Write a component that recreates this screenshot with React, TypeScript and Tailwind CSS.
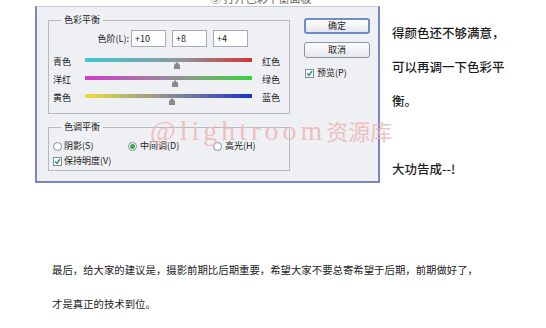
import React from 'react';

const sliders = [
  { left: '青色', right: '红色', pos: 92, bar: 'bg-[linear-gradient(90deg,#3cc8d4,#8a9aa0_55%,#d23434)]' },
  { left: '洋红', right: '绿色', pos: 90, bar: 'bg-[linear-gradient(90deg,#d23cc8,#9a8a9a_50%,#3cd43c)]' },
  { left: '黄色', right: '蓝色', pos: 87, bar: 'bg-[linear-gradient(90deg,#e6e03c,#8c8c98_50%,#2030c4)]' },
];

const Thumb = () => (
  <svg width="8" height="7" viewBox="0 0 8 7">
    <path d="M4 0 L7 3 L7 7 L1 7 L1 3 Z" fill="#8a8a8a" />
  </svg>
);

const Radio = ({ checked }: { checked?: boolean }) => (
  <span className="w-[9px] h-[9px] rounded-full border border-[#7f8ea6] bg-white flex items-center justify-center">
    {checked && <span className="w-[5px] h-[5px] rounded-full bg-[#35a845]" />}
  </span>
);

const Check = () => (
  <span className="w-[9px] h-[9px] border border-[#7f8ea6] bg-white flex items-center justify-center">
    <svg width="7" height="7" viewBox="0 0 7 7">
      <path d="M1 3.5 L3 5.5 L6 1" fill="none" stroke="#2f9a3a" strokeWidth="1.4" />
    </svg>
  </span>
);

export default function App() {
  return (
    <div className="relative w-[546px] h-[328px] bg-white overflow-hidden font-['Noto_Sans_CJK_SC',sans-serif] text-[#1c1c1c]">
      {/* cut-off caption above the dialog */}
      <div className="h-[6px] overflow-hidden">
        <div className="ml-[210px] -mt-[9px] text-[11px] leading-[14px] text-[#666]">③ 打开色彩平衡面板</div>
      </div>

      <div className="flex items-start h-[180px]">
        {/* dialog */}
        <div className="ml-[35px] w-[345px] h-[177px] bg-[#eef0f4] border-x-2 border-b-2 border-[#7d84c4] border-t border-t-[#c4c8d4] flex pl-[11px] text-[9px] leading-[10px]">
          <div className="w-[242px] pt-[8px]">
            <fieldset className="border border-[#b6bac4] px-[4px] pb-[7px] h-[99px]">
              <legend className="ml-[8px] px-[3px] leading-[10px]">色彩平衡</legend>
              <div className="flex items-center mt-[5px] h-[17px]">
                <span className="w-[78px] text-right pr-[2px]">色阶(L):</span>
                <div className="flex gap-[6px]">
                  {['+10', '+8', '+4'].map((v) => (
                    <div key={v} className="w-[35px] h-[17px] bg-white border border-[#a4abba] pl-[3px] flex items-center">
                      {v}
                    </div>
                  ))}
                </div>
              </div>
              <div className="mt-[6px]">
                {sliders.map((s) => (
                  <div key={s.left} className="flex items-center h-[18px]">
                    <span className="w-[32px]">{s.left}</span>
                    <div className="relative w-[167px] h-[18px]">
                      <div className={`mt-[5px] h-[4px] ${s.bar}`} />
                      <div className="absolute top-[9px]" style={{ left: s.pos - 4 }}>
                        <Thumb />
                      </div>
                    </div>
                    <span className="ml-[10px]">{s.right}</span>
                  </div>
                ))}
              </div>
            </fieldset>

            <fieldset className="mt-[8px] border border-[#b6bac4] px-[4px] h-[49px]">
              <legend className="ml-[8px] px-[3px] leading-[10px]">色调平衡</legend>
              <div className="flex items-center mt-[8px] h-[12px]">
                <div className="w-[75px] flex items-center gap-[2px]">
                  <Radio />
                  <span>阴影(S)</span>
                </div>
                <div className="w-[85px] flex items-center gap-[3px]">
                  <Radio checked />
                  <span>中间调(D)</span>
                </div>
                <div className="flex items-center gap-[3px]">
                  <Radio />
                  <span>高光(H)</span>
                </div>
              </div>
              <div className="flex items-center gap-[2px] mt-[3px] h-[12px]">
                <Check />
                <span>保持明度(V)</span>
              </div>
            </fieldset>
          </div>

          <div className="ml-[14px] pt-[11px]">
            <button className="w-[66px] h-[16px] rounded-[3px] border-2 border-[#6f8cc4] bg-[linear-gradient(#ffffff,#e4e6ec)] flex items-center justify-center">
              确定
            </button>
            <button className="mt-[8px] w-[66px] h-[16px] rounded-[3px] border border-[#8a94a8] bg-[linear-gradient(#ffffff,#e4e6ec)] flex items-center justify-center">
              取消
            </button>
            <div className="mt-[9px] h-[12px] flex items-center gap-[3px] pl-[1px]">
              <Check />
              <span>预览(P)</span>
            </div>
          </div>
        </div>

        {/* side text */}
        <div className="ml-[12px] pt-[10px] text-[12.5px] leading-[34px] font-medium whitespace-nowrap">
          <div>得颜色还不够满意，</div>
          <div>可以再调一下色彩平</div>
          <div>衡。</div>
          <div>&nbsp;</div>
          <div>大功告成--!</div>
        </div>
      </div>

      <div className="mt-[67px] pl-[52px] text-[10.4px] leading-[34px] whitespace-nowrap">
        <div>最后，给大家的建议是，摄影前期比后期重要，希望大家不要总寄希望于后期，前期做好了，</div>
        <div>才是真正的技术到位。</div>
      </div>

      {/* watermark */}
      <div className="absolute left-[150px] top-[110px] whitespace-nowrap text-[#f0b4b4] opacity-80 flex items-baseline">
        <span className="font-['Liberation_Serif',serif] text-[28px] tracking-[4px]">@lightroom</span>
        <span className="text-[22px]">资源库</span>
      </div>
    </div>
  );
}
